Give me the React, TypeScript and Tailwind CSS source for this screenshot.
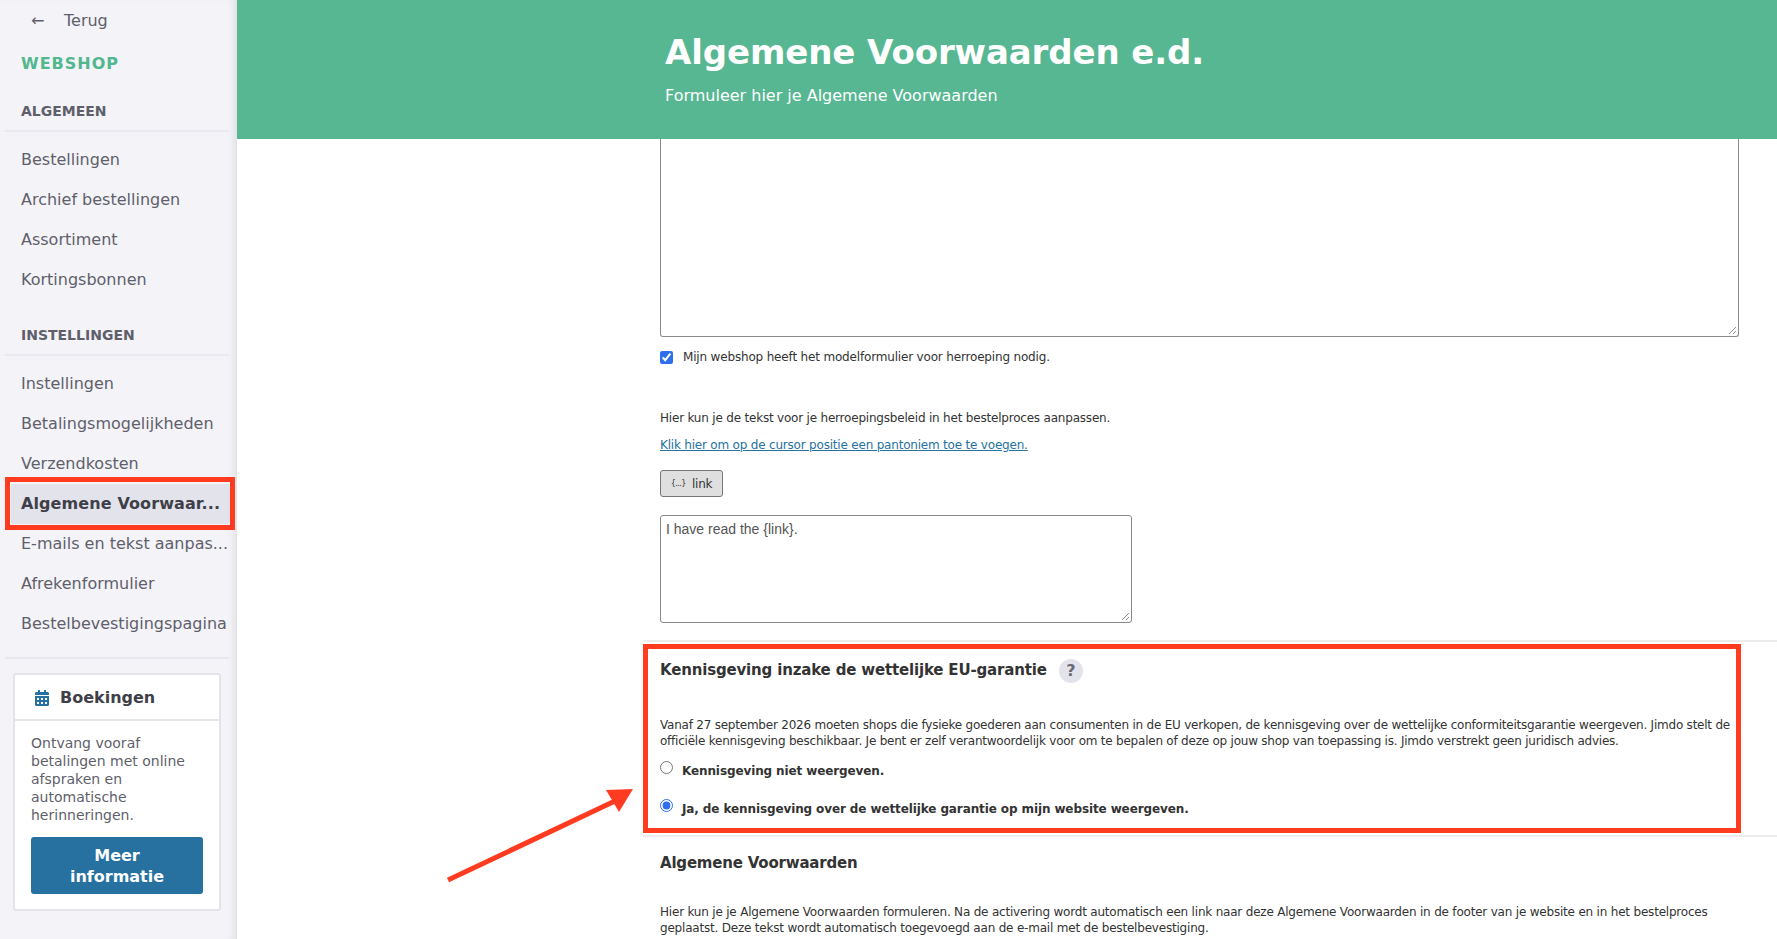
import { FaCalendarAlt } from 'react-icons/fa';

const algemeen = ['Bestellingen', 'Archief bestellingen', 'Assortiment', 'Kortingsbonnen'];
const instellingenBefore = ['Instellingen', 'Betalingsmogelijkheden', 'Verzendkosten'];
const instellingenAfter = ['E-mails en tekst aanpas...', 'Afrekenformulier', 'Bestelbevestigingspagina'];

function NavItem({ label }: { label: string }) {
  return <div className="flex h-10 items-center whitespace-nowrap pl-[21px] text-base text-[#5f5f6b]">{label}</div>;
}

function Sidebar() {
  return (
    <aside className="h-full w-[237px] shrink-0 overflow-hidden bg-[#f3f3f8] shadow-[inset_-8px_0_8px_-6px_rgba(0,0,0,0.1)]">
      <div className="flex h-10 items-center pt-[2px] text-base text-[#5f5f6b]">
        <span className="ml-[31px] w-[33px] leading-none">←</span>
        <span>Terug</span>
      </div>
      <div className="flex h-[46px] items-center pl-[21px] pt-[2px] text-base font-bold tracking-[1px] text-[#52b78e]">WEBSHOP</div>

      <div className="mt-3 flex h-[26px] items-center pl-[21px] text-sm font-bold text-[#5f5f6b]">ALGEMEEN</div>
      <div className="ml-[5px] mt-[6px] h-[2px] w-[224px] bg-[#e8e8ee]" />
      <nav className="mt-2">
        {algemeen.map(label => <NavItem key={label} label={label} />)}
      </nav>

      <div className="mt-[22px] flex h-[26px] items-center pl-[21px] text-sm font-bold text-[#5f5f6b]">INSTELLINGEN</div>
      <div className="ml-[5px] mt-[6px] h-[2px] w-[224px] bg-[#e8e8ee]" />
      <nav className="mt-2">
        {instellingenBefore.map(label => <NavItem key={label} label={label} />)}
        <div className="relative ml-[11px] flex h-10 w-[219px] items-center whitespace-nowrap rounded-[2px] bg-[#e3e3ec] pl-[10px] text-base font-bold tracking-[0.1px] text-[#3f3f49]">
          Algemene Voorwaar...
          <div className="absolute left-[-6px] top-[-7px] h-[53px] w-[230px] border-[5px] border-[#ff3b20]" />
        </div>
        {instellingenAfter.map(label => <NavItem key={label} label={label} />)}
      </nav>
      <div className="ml-[5px] mt-[13px] h-[2px] w-[224px] bg-[#e8e8ee]" />

      <div className="ml-[13px] mt-[14px] h-[238px] w-[208px] rounded-[3px] border-2 border-[#e3e3ec] bg-white">
        <div className="flex h-[46px] items-center border-b-2 border-[#e3e3ec] pl-[19px] pt-[2px]">
          <FaCalendarAlt size={16} className="text-[#26719f]" />
          <span className="ml-[10px] text-base font-bold text-[#3f3f49]">Boekingen</span>
        </div>
        <div className="px-4 pt-[13px]">
          <p className="text-sm leading-[18px] text-[#5f5f6b]">Ontvang vooraf betalingen met online afspraken en automatische herinneringen.</p>
          <button className="mt-[13px] h-[57px] w-[172px] rounded-[3px] bg-[#26719f] text-base font-bold leading-[21px] text-white">Meer<br />informatie</button>
        </div>
      </div>
    </aside>
  );
}

function Content() {
  return (
    <div className="relative flex-1 overflow-hidden bg-white text-[12px] leading-4 tracking-[-0.2px] text-[#333]">
      <div className="pl-[423px] pr-[38px]">
        <div className="relative h-[198px] rounded-b-[3px] border border-t-0 border-[#8a8a8a] bg-white">
          <ResizeGrip />
        </div>
        <label className="mt-[13px] flex h-[14px] items-center">
          <input type="checkbox" defaultChecked className="h-[13px] w-[13px] accent-[#2f6fed]" />
          <span className="ml-[10px] tracking-[-0.17px]">Mijn webshop heeft het modelformulier voor herroeping nodig.</span>
        </label>
        <p className="mt-[46px]">Hier kun je de tekst voor je herroepingsbeleid in het bestelproces aanpassen.</p>
        <p className="mt-[11px]"><a className="text-[#26719f] underline">Klik hier om op de cursor positie een pantoniem toe te voegen.</a></p>
        <button className="mt-[17px] flex h-[27px] w-[63px] items-center justify-center gap-[6px] rounded-[3px] border border-[#777] bg-[#dfdfdf] text-[12px] text-[#333]">
          <span className="text-[8px] tracking-[-0.5px]">{'{...}'}</span>link
        </button>
        <div className="relative mt-[18px] h-[108px] w-[472px] rounded-[3px] border border-[#8a8a8a] bg-white px-[5px] pt-[4px] font-['Liberation_Sans',sans-serif] text-[14px] leading-[18px] tracking-normal text-[#555]">
          I have read the {'{link}'}.
          <ResizeGrip />
        </div>
      </div>

      <div className="ml-[406px] mt-[17px] h-[2px] bg-[#ececec]" />
      <section className="ml-[406px] mt-[2px] h-[189px] w-[1098px] border-[5px] border-[#ff3b20] px-3 pt-[8px]">
        <div className="flex items-center">
          <h2 className="text-[15px] font-bold leading-6 tracking-[-0.17px] text-[#333]">Kennisgeving inzake de wettelijke EU-garantie</h2>
          <span className="ml-[12px] mt-[2px] flex h-6 w-6 items-center justify-center rounded-full bg-[#e3e3ec] text-base font-bold text-[#6a6a75]">?</span>
        </div>
        <p className="mt-[34px] whitespace-nowrap tracking-[-0.225px]">
          Vanaf 27 september 2026 moeten shops die fysieke goederen aan consumenten in de EU verkopen, de kennisgeving over de wettelijke conformiteitsgarantie weergeven. Jimdo stelt de<br />
          officiële kennisgeving beschikbaar. Je bent er zelf verantwoordelijk voor om te bepalen of deze op jouw shop van toepassing is. Jimdo verstrekt geen juridisch advies.
        </p>
        <label className="mt-3 flex items-start">
          <input type="radio" name="garantie" className="h-[13px] w-[13px] accent-[#2f6fed]" />
          <span className="ml-[9px] mt-[2px] font-bold tracking-[-0.11px]">Kennisgeving niet weergeven.</span>
        </label>
        <label className="mt-5 flex items-start">
          <input type="radio" name="garantie" defaultChecked className="h-[13px] w-[13px] accent-[#2f6fed]" />
          <span className="ml-[9px] mt-[2px] font-bold tracking-[-0.11px]">Ja, de kennisgeving over de wettelijke garantie op mijn website weergeven.</span>
        </label>
      </section>
      <div className="ml-[406px] mt-[2px] h-[2px] bg-[#ececec]" />

      <div className="pl-[423px] pr-[38px]">
        <h2 className="mt-4 text-[15px] font-bold leading-5 tracking-[-0.2px]">Algemene Voorwaarden</h2>
        <p className="mt-[31px] whitespace-nowrap">
          Hier kun je je Algemene Voorwaarden formuleren. Na de activering wordt automatisch een link naar deze Algemene Voorwaarden in de footer van je website en in het bestelproces<br />
          geplaatst. Deze tekst wordt automatisch toegevoegd aan de e-mail met de bestelbevestiging.
        </p>
      </div>

      {/* red annotation arrow */}
      <svg className="absolute left-[210px] top-[650px]" width="188" height="94" viewBox="0 0 188 94">
        <line x1="1" y1="91" x2="168" y2="12" stroke="#ff3b20" strokeWidth="5" />
        <polygon points="186,0 159,1 172,23" fill="#ff3b20" />
      </svg>
    </div>
  );
}

function ResizeGrip() {
  return (
    <svg className="absolute bottom-[1px] right-[1px]" width="9" height="9" viewBox="0 0 9 9">
      <path d="M1 8 L8 1 M5 8 L8 5" stroke="#777" strokeWidth="0.8" fill="none" />
    </svg>
  );
}

export default function App() {
  return (
    <div className="flex h-screen w-full overflow-hidden bg-white font-['DejaVu_Sans',sans-serif]">
      <Sidebar />
      <main className="flex h-full min-w-0 flex-1 flex-col">
        <header className="h-[139px] shrink-0 bg-[#57b792] pl-[428px] text-white">
          <h1 className="pt-[30px] text-[34px] font-bold leading-[44px] tracking-[-0.1px]">Algemene Voorwaarden e.d.</h1>
          <p className="mt-3 text-base leading-5">Formuleer hier je Algemene Voorwaarden</p>
        </header>
        <Content />
      </main>
    </div>
  );
}
